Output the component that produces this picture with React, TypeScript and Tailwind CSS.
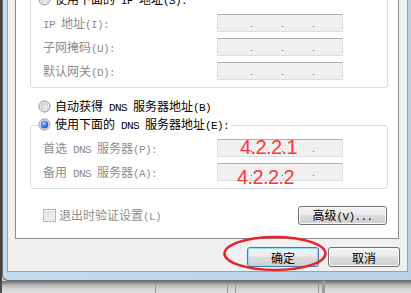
import React from "react";

function T({ s }: { s: string }) {
  const parts = s.match(/[\x00-\x7f]+|[^\x00-\x7f]+/g) ?? [];
  return (
    <span className="whitespace-pre">
      {parts.map((p, i) =>
        /^[\x00-\x7f]/.test(p) ? (
          <span key={i} className="font-['Liberation_Mono',monospace] text-[11px] tracking-[-0.6px]">
            {p}
          </span>
        ) : (
          <span key={i} className="font-['Noto_Sans_CJK_SC',sans-serif] text-[12px]">
            {p}
          </span>
        )
      )}
    </span>
  );
}

function Radio({ checked }: { checked?: boolean }) {
  return (
    <svg width="13" height="13" viewBox="0 0 13 13" className="shrink-0">
      <defs>
        <linearGradient id="rin" x1="0" y1="0" x2="1" y2="1">
          <stop offset="0" stopColor="#cfcfcf" />
          <stop offset="1" stopColor="#fbfbfb" />
        </linearGradient>
        <radialGradient id="rblue" cx="0.4" cy="0.35" r="0.7">
          <stop offset="0" stopColor="#a8ccff" />
          <stop offset="0.55" stopColor="#3d7be6" />
          <stop offset="1" stopColor="#1b4fc4" />
        </radialGradient>
      </defs>
      <circle cx="6.5" cy="6.5" r="5.5" fill="#f6f6f6" stroke="#8c8e90" />
      {checked ? (
        <circle cx="6.5" cy="6.5" r="3.9" fill="url(#rblue)" />
      ) : (
        <circle cx="6.5" cy="6.5" r="3.6" fill="url(#rin)" stroke="#c4c4c4" strokeWidth="0.8" />
      )}
    </svg>
  );
}

function IpBox() {
  return (
    <div className="w-[126px] h-[18px] shrink-0 bg-[#f0f0f0] border border-[#dcdee3] border-t-[#abadb3] flex items-end pl-[33px] pb-[4px] gap-[30px]">
      <span className="w-px h-px bg-[#666]" />
      <span className="w-px h-px bg-[#666]" />
      <span className="w-px h-px bg-[#666]" />
    </div>
  );
}

function Row({ label }: { label: string }) {
  return (
    <div className="flex items-center h-[18px]">
      <span className="w-[174px] shrink-0 leading-[16px] text-[#8d8d8d]">
        <T s={label} />
      </span>
      <IpBox />
    </div>
  );
}

function Btn({
  children,
  def,
  className,
}: {
  children: React.ReactNode;
  def?: boolean;
  className?: string;
}) {
  return (
    <div
      className={`flex items-center justify-center rounded-[3px] border leading-[16px] bg-[linear-gradient(#f3f3f3,#ebebeb_45%,#dddddd_50%,#cfcfcf)] ${
        def
          ? "border-[#3c7fb1] shadow-[inset_0_0_0_1px_#98dcf8]"
          : "border-[#707070] shadow-[inset_0_0_0_1px_#fbfbfb]"
      } ${className ?? ""}`}
    >
      {children}
    </div>
  );
}

export default function App() {
  return (
    <div className="relative w-[411px] h-[293px] overflow-hidden bg-[#d9d9d9] text-black">
      <div className="flex h-[281px]">
        <div className="w-[2px] shrink-0 bg-[#404040]" />
        <div className="flex-1 flex flex-col rounded-bl-[6px] border-l border-b border-[#6e6e6e] bg-[linear-gradient(90deg,#c4daef,#b9d1ea)] pl-[4px] pr-[3px] pb-[8px]">
          <div className="flex-1 flex flex-col bg-[#f0f0f0] border-l border-r border-b border-[#97a3b0]">
            {/* tab panel */}
            <div className="ml-[7px] mr-[8px] bg-white border-l border-r border-b border-[#898c95] flex flex-col pb-[13px]">
              {/* group 1 */}
              <div className="relative -mt-[2px] ml-[14px] mr-[10px] border border-[#d5dfe5] rounded-[3px] pt-[15px] pb-[7px] pl-[12px] flex flex-col gap-[6px]">
                <div className="absolute left-[7px] top-[-8px] h-[16px] flex items-center bg-white pr-[2px]">
                  <Radio />
                  <span className="ml-[4px] leading-[16px]">
                    <T s="使用下面的 IP 地址(S):" />
                  </span>
                </div>
                <Row label="IP 地址(I):" />
                <Row label="子网掩码(U):" />
                <Row label="默认网关(D):" />
              </div>

              {/* DNS auto */}
              <div className="flex items-center h-[16px] mt-[10px] ml-[22px]">
                <Radio />
                <span className="ml-[4px] leading-[16px]">
                  <T s="自动获得 DNS 服务器地址(B)" />
                </span>
              </div>

              {/* group 2 */}
              <div className="relative mt-[11px] ml-[14px] mr-[10px] border border-[#d5dfe5] rounded-[3px] pt-[13px] pb-[7px] pl-[12px] flex flex-col gap-[6px]">
                <div className="absolute left-[7px] top-[-10px] h-[16px] flex items-center bg-white pr-[2px]">
                  <Radio checked />
                  <span className="ml-[4px] leading-[16px]">
                    <T s="使用下面的 DNS 服务器地址(E):" />
                  </span>
                </div>
                <Row label="首选 DNS 服务器(P):" />
                <Row label="备用 DNS 服务器(A):" />
              </div>

              {/* checkbox + advanced */}
              <div className="flex items-center h-[19px] mt-[17px] ml-[27px] mr-[11px]">
                <div className="w-[13px] h-[13px] shrink-0 border border-[#b4b4b4] bg-[#f6f6f6] p-[1px]">
                  <div className="w-full h-full border border-[#e2e2e2] bg-[linear-gradient(135deg,#dcdcdc,#fafafa)]" />
                </div>
                <span className="ml-[3px] leading-[16px] text-[#8d8d8d]">
                  <T s="退出时验证设置(L)" />
                </span>
                <Btn className="ml-auto w-[89px] h-[19px]">
                  <T s="高级(V)..." />
                </Btn>
              </div>
            </div>

            {/* dialog buttons */}
            <div className="flex justify-end gap-[9px] pr-[7px] mt-[8px]">
              <Btn def className="w-[72px] h-[20px]">
                <T s="确定" />
              </Btn>
              <Btn className="w-[72px] h-[20px]">
                <T s="取消" />
              </Btn>
            </div>
          </div>
        </div>
      </div>

      {/* area below the window */}
      <div className="flex h-[12px]">
        <div className="w-[2px] shrink-0 bg-[#4a4a4a]" />
        <div className="flex-1 bg-[linear-gradient(#6f6f6f,#b9b9b9_35%,#d6d6d6_70%,#dedede)]" />
      </div>
      <div className="absolute left-[155px] top-[283px] w-[73px] h-[12px] border-l border-t border-r border-[#9a9a9a]" />
      <div className="absolute left-[235px] top-[283px] w-[84px] h-[12px] border-l border-t border-r border-[#9a9a9a]" />
      <div className="absolute left-[322px] top-[281px] w-[3px] h-[12px] bg-[#9a9a9a]" />

      {/* red annotations */}
      <div className="absolute left-[240px] top-[137px] text-[20px] leading-[20px] tracking-[-0.6px] text-[#ff3434] font-['Liberation_Sans',sans-serif]">
        4.2.2.1
      </div>
      <div className="absolute left-[237px] top-[167px] text-[20px] leading-[20px] tracking-[-0.6px] text-[#ff3434] font-['Liberation_Sans',sans-serif]">
        4.2.2.2
      </div>
      <svg className="absolute left-[222px] top-[235px]" width="106" height="38" viewBox="0 0 106 38">
        <ellipse cx="53" cy="18.5" rx="50.5" ry="16.5" fill="none" stroke="#e8232a" strokeWidth="2.5" />
      </svg>
    </div>
  );
}
